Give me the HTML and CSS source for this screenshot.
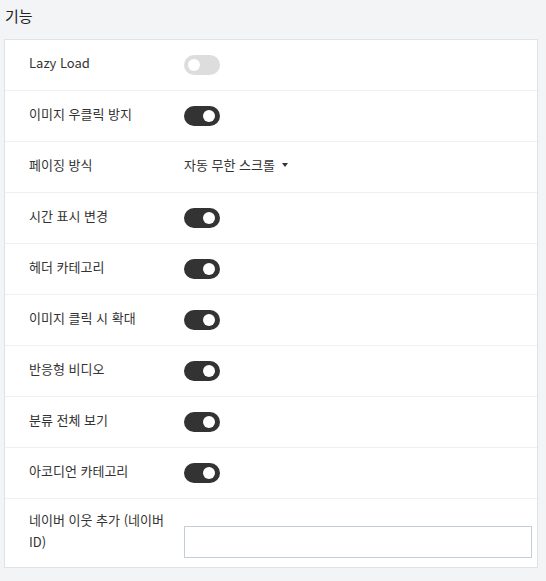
FILE: index.html
```html
<!DOCTYPE html>
<html lang="ko">
<head>
<meta charset="utf-8">
<link rel="stylesheet" href="styles.css">
</head>
<body>
<h2 class="title">기능</h2>
<div class="card">
  <div class="row"><div class="label">Lazy Load</div><div class="value"><span class="toggle"></span></div></div>
  <div class="row"><div class="label">이미지 우클릭 방지</div><div class="value"><span class="toggle on"></span></div></div>
  <div class="row"><div class="label">페이징 방식</div><div class="value"><span class="select">자동 무한 스크롤<span class="caret"></span></span></div></div>
  <div class="row"><div class="label">시간 표시 변경</div><div class="value"><span class="toggle on"></span></div></div>
  <div class="row"><div class="label">헤더 카테고리</div><div class="value"><span class="toggle on"></span></div></div>
  <div class="row"><div class="label">이미지 클릭 시 확대</div><div class="value"><span class="toggle on"></span></div></div>
  <div class="row"><div class="label">반응형 비디오</div><div class="value"><span class="toggle on"></span></div></div>
  <div class="row"><div class="label">분류 전체 보기</div><div class="value"><span class="toggle on"></span></div></div>
  <div class="row"><div class="label">아코디언 카테고리</div><div class="value"><span class="toggle on"></span></div></div>
  <div class="row last"><div class="label">네이버 이웃 추가 (네이버 ID)</div><div class="value"><input class="text-input" type="text"></div></div>
</div>
</body>
</html>
```
FILE: styles.css
```css
html, body {
  margin: 0;
  background: #f3f4f6;
}
body {
  padding: 5px 8px 0 4px;
  font-family: "Noto Sans CJK KR", "Noto Sans", sans-serif;
  color: #333;
}
.title {
  margin: 0 0 12px 1px;
  font-size: 15px;
  font-weight: 400;
  line-height: 22px;
  color: #222;
}
.card {
  background: #fff;
  border: 1px solid #dfe3e8;
}
.row {
  display: flex;
  align-items: center;
  padding: 12px 0;
  border-bottom: 1px solid #eef0f2;
  font-size: 13px;
  line-height: 22px;
}
.row.last {
  border-bottom: none;
  align-items: flex-end;
  padding: 10px 0 9px;
}
.label {
  flex: 0 0 143px;
  padding: 0 12px 4px 24px;
  color: #333;
  word-break: keep-all;
}
.row.last .label {
  padding-bottom: 5px;
}
.value {
  flex: 1;
  display: flex;
  align-items: center;
  padding-right: 5px;
}
.toggle {
  position: relative;
  display: block;
  width: 36px;
  height: 20px;
  border-radius: 10px;
  background: #dddddd;
}
.toggle::after {
  content: "";
  position: absolute;
  top: 4px;
  left: 4px;
  width: 12px;
  height: 12px;
  border-radius: 50%;
  background: #fff;
}
.toggle.on {
  background: #333333;
}
.toggle.on::after {
  left: auto;
  right: 5px;
}
.select {
  display: flex;
  align-items: center;
  color: #333;
  padding-bottom: 4px;
}
.caret {
  display: inline-block;
  margin-left: 7px;
  width: 0;
  height: 0;
  border-left: 3.5px solid transparent;
  border-right: 3.5px solid transparent;
  border-top: 4px solid #333;
}
.text-input {
  box-sizing: border-box;
  width: 100%;
  height: 32px;
  margin: 0;
  border: 1px solid #c5cdd6;
  border-radius: 0;
  background: #fff;
  font: inherit;
  outline: none;
}
```
